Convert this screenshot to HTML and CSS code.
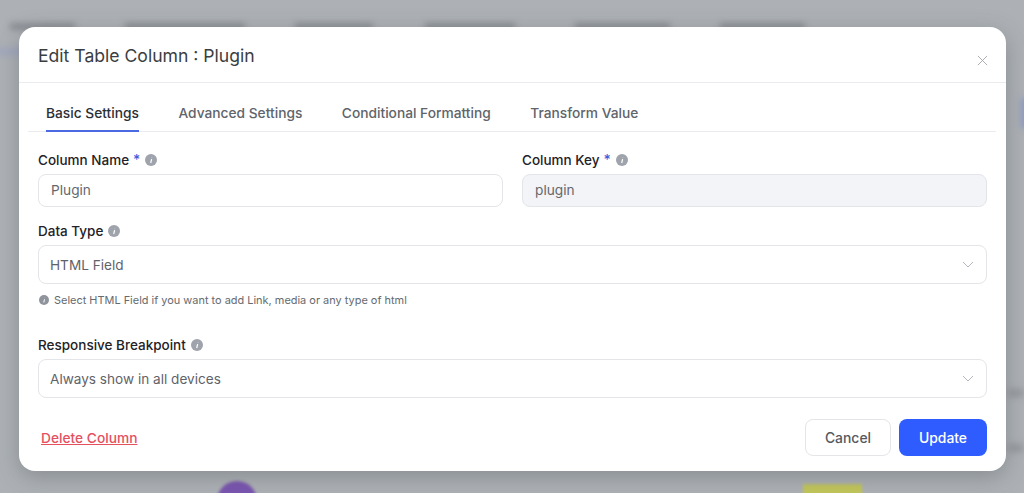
FILE: index.html
```html
<!DOCTYPE html>
<html lang="en">
<head>
<meta charset="utf-8">
<title>Edit Table Column</title>
<link rel="stylesheet" href="styles.css">
</head>
<body>
<div class="backdrop">
  <span class="blur nav n1"></span><span class="blur nav n2"></span><span class="blur nav n3"></span><span class="blur nav n4"></span><span class="blur nav n5"></span><span class="blur nav n6"></span>
  <span class="blur stripe"></span>
  <span class="blur side"></span>
  <span class="blur dot d1"></span><span class="blur dot d2"></span>
  <span class="blur avatar"></span>
  <span class="blur tag"></span>
</div>
<div class="modal">
  <header class="modal-head">
    <h1 class="title">Edit Table Column : Plugin</h1>
    <svg class="close" viewBox="0 0 12 12" width="11" height="11"><path d="M1 1l10 10M11 1L1 11" fill="none" stroke="#a3a7ad" stroke-width="1"/></svg>
  </header>
  <nav class="tabs">
    <a class="tab active">Basic Settings</a>
    <a class="tab">Advanced Settings</a>
    <a class="tab">Conditional Formatting</a>
    <a class="tab">Transform Value</a>
  </nav>
  <div class="form">
    <div class="row">
      <div class="field">
        <label class="label">Column Name<span class="req">*</span><svg class="info" viewBox="0 0 12 12"><circle cx="6" cy="6" r="6" fill="#9ea3ac"/><path d="M6.6 5.2 5.7 9M6.8 3.2v.2" stroke="#fff" stroke-width="1.2" fill="none"/></svg></label>
        <div class="input">Plugin</div>
      </div>
      <div class="field">
        <label class="label">Column Key<span class="req">*</span><svg class="info" viewBox="0 0 12 12"><circle cx="6" cy="6" r="6" fill="#9ea3ac"/><path d="M6.6 5.2 5.7 9M6.8 3.2v.2" stroke="#fff" stroke-width="1.2" fill="none"/></svg></label>
        <div class="input disabled">plugin</div>
      </div>
    </div>
    <div class="field type">
      <label class="label">Data Type<svg class="info" viewBox="0 0 12 12"><circle cx="6" cy="6" r="6" fill="#9ea3ac"/><path d="M6.6 5.2 5.7 9M6.8 3.2v.2" stroke="#fff" stroke-width="1.2" fill="none"/></svg></label>
      <div class="select">HTML Field<svg class="chev" viewBox="0 0 12 7" width="12" height="7"><path d="M1 1l5 5 5-5" fill="none" stroke="#b4b8be" stroke-width="1"/></svg></div>
      <p class="hint"><svg class="info small" viewBox="0 0 12 12"><circle cx="6" cy="6" r="6" fill="#8f949c"/><path d="M6.6 5.2 5.7 9M6.8 3.2v.2" stroke="#fff" stroke-width="1.2" fill="none"/></svg>Select HTML Field if you want to add Link, media or any type of html</p>
    </div>
    <div class="field resp">
      <label class="label">Responsive Breakpoint<svg class="info" viewBox="0 0 12 12"><circle cx="6" cy="6" r="6" fill="#9ea3ac"/><path d="M6.6 5.2 5.7 9M6.8 3.2v.2" stroke="#fff" stroke-width="1.2" fill="none"/></svg></label>
      <div class="select">Always show in all devices<svg class="chev" viewBox="0 0 12 7" width="12" height="7"><path d="M1 1l5 5 5-5" fill="none" stroke="#b4b8be" stroke-width="1"/></svg></div>
    </div>
  </div>
  <footer class="foot">
    <a class="delete">Delete Column</a>
    <div class="actions">
      <button class="btn cancel">Cancel</button>
      <button class="btn update">Update</button>
    </div>
  </footer>
</div>
</body>
</html>
```
FILE: styles.css
```css
* { box-sizing: border-box; }
html, body { margin: 0; height: 493px; overflow: hidden; }
body { background: #adb1b5; font-family: Inter, "Liberation Sans", sans-serif; position: relative; }
.backdrop { position: absolute; inset: 0; overflow: hidden; }
.blur { position: absolute; display: block; filter: blur(3px); }
.nav { top: 23px; height: 7px; background: #898d92; }
.n1 { left: 10px; width: 65px; }
.n2 { left: 125px; width: 120px; }
.n3 { left: 295px; width: 78px; }
.n4 { left: 425px; width: 90px; }
.n5 { left: 575px; width: 95px; }
.n6 { left: 720px; width: 85px; }
.stripe { left: -5px; top: 47px; width: 30px; height: 9px; background: #a2a8bb; }
.side { left: 1021px; top: 98px; width: 12px; height: 30px; background: #8f9ac4; }
.dot { left: 1008px; width: 16px; height: 8px; background: #96999d; }
.d1 { top: 389px; }
.d2 { top: 444px; }
.avatar { left: 217px; top: 481px; width: 40px; height: 40px; border-radius: 50%; background: #7a55b0; filter: blur(1.5px); }
.tag { left: 803px; top: 484px; width: 59px; height: 20px; background: #c2c65a; filter: blur(1.5px); }
.modal { position: absolute; left: 19px; top: 27px; width: 987px; height: 444px; background: #fff; border-radius: 16px; box-shadow: 0 6px 22px rgba(70,74,80,.35); display: flex; flex-direction: column; }
.modal-head { height: 56px; border-bottom: 1px solid #e9ebee; padding: 1px 18px 0 19px; display: flex; justify-content: space-between; align-items: center; flex: none; }
.title { margin: 0; font-size: 17.6px; font-weight: 400; color: #3a3d42; }
.close { margin: 10px 0 0 0; }
.tabs { display: flex; gap: 39.5px; margin: 0 10px 0 9px; padding-left: 18px; border-bottom: 1px solid #e9ebee; height: 49px; flex: none; }
.tab { font-size: 13.75px; font-weight: 500; color: #60646b; line-height: 20px; padding: 19.5px 0 0; height: 49px; }
.tab.active { color: #2c2f35; border-bottom: 2px solid #4a69e2; }
.form { padding: 18px 19px 0; flex: none; }
.row { display: grid; grid-template-columns: 465px 465px; gap: 19px; }
.label { display: flex; align-items: center; font-size: 13.5px; font-weight: 500; color: #1f2227; line-height: 20px; height: 20px; margin-bottom: 4px; white-space: pre; }
.req { color: #3f5fdc; margin-left: 4px; font-size: 14px; }
.info { width: 12px; height: 12px; margin-left: 5px; flex: none; }
.info.small { width: 10px; height: 10px; margin: 0 5px 0 1px; }
.input { height: 33px; border: 1px solid #e3e5e9; border-radius: 8px; padding: 0 12px; font-size: 13.7px; line-height: 31px; color: #64686e; }
.input.disabled { background: #f3f4f7; }
.type { margin-top: 14px; }
.select { height: 39px; border: 1px solid #e3e5e9; border-radius: 8px; padding: 0 12px 0 11px; font-size: 13.6px; line-height: 20px; color: #5f6369; display: flex; justify-content: space-between; align-items: center; }
.hint { margin: 9px 0 0; font-size: 10.95px; line-height: 14px; color: #666a70; display: flex; align-items: center; }
.resp { margin-top: 28px; }
.foot { display: flex; justify-content: space-between; align-items: center; padding: 21px 19px 0 22px; }
.delete { font-size: 13.75px; font-weight: 500; color: #e5505f; text-decoration: underline; }
.actions { display: flex; gap: 8px; }
.btn { height: 37px; border-radius: 8px; font: 500 13.9px Inter, "Liberation Sans", sans-serif; }
.cancel { width: 86px; background: #fff; border: 1px solid #e3e5e9; color: #55595f; }
.update { width: 88px; background: #2f5cff; border: 0; color: #fff; }
```
